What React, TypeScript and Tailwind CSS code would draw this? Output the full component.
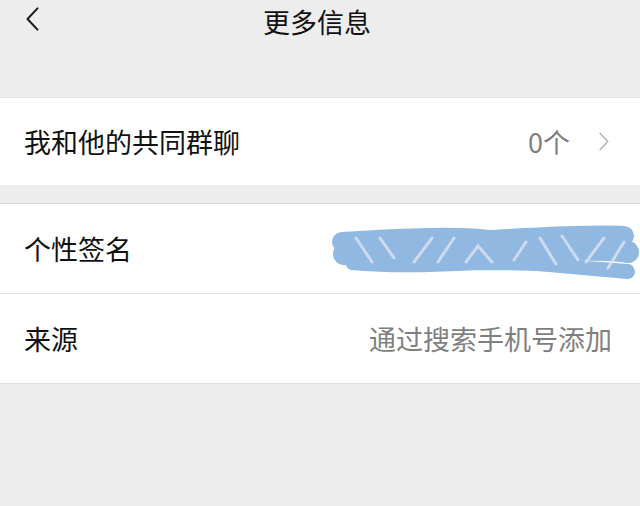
import React from "react";

const font = { fontFamily: '"Noto Sans CJK SC", "Noto Sans", sans-serif' };

function Chevron({ className, left }: { className: string; left?: boolean }) {
  return (
    <svg className={className} viewBox="0 0 12 20" fill="none" stroke="currentColor" strokeWidth={1.6}>
      <path
        d={left ? "M10 1.5 L2 10 L10 18.5" : "M2 1.5 L10 10 L2 18.5"}
        strokeLinecap="round"
        strokeLinejoin="round"
      />
    </svg>
  );
}

// blue marker scribble covering the signature text
function Scribble() {
  return (
    <svg className="absolute left-[328px] top-[18px] h-[60px] w-[312px]" viewBox="0 0 312 60">
      <g stroke="#91b8e0" strokeLinecap="round" strokeLinejoin="round" fill="none">
        <path d="M14 20 C80 16 130 14 160 18 C200 16 260 12 296 14" strokeWidth={20} />
        <path d="M16 32 C90 32 150 28 200 30 C240 28 280 26 300 30" strokeWidth={22} />
        <path d="M24 42 C70 46 110 44 150 42 C200 42 250 44 300 48" strokeWidth={12} />
        <path d="M210 42 L300 50" strokeWidth={14} />
      </g>
      <g stroke="#dce3f4" strokeWidth={3} strokeLinecap="round" fill="none" opacity={0.8}>
        <path d="M28 16 L44 40" />
        <path d="M52 16 L66 36" />
        <path d="M86 40 L104 16" />
        <path d="M110 40 L126 16" />
        <path d="M138 40 L150 24 L164 40" />
        <path d="M186 38 L198 20" />
        <path d="M212 16 L228 42" />
        <path d="M234 14 L250 38" />
        <path d="M258 40 L276 16" />
        <path d="M280 46 L296 20" />
      </g>
    </svg>
  );
}

export default function App() {
  return (
    <div className="h-[506px] w-[640px] overflow-hidden bg-[#ededed]" style={font}>
      {/* Header */}
      <div className="relative flex h-[42px] items-center justify-center pr-[6px]">
        <Chevron left className="absolute left-[25px] top-[6px] h-[26px] w-[15px] text-[#1a1a1a]" />
        <span className="text-[27px] leading-none text-[#111]">更多信息</span>
      </div>
      <div className="h-[55px]" />

      {/* Common groups */}
      <div className="flex h-[88px] items-center border-t border-[#e2e2e2] bg-white pl-[24px] pr-[30px]">
        <span className="flex-1 text-[27px] leading-none text-[#111]">我和他的共同群聊</span>
        <span className="text-[27px] leading-none text-[#7f7f7f]">0个</span>
        <Chevron className="ml-[28px] h-[19px] w-[12px] text-[#b2b2b2]" />
      </div>

      <div className="h-[18px]" />

      {/* Info rows */}
      <div className="border-y border-[#dedede] bg-white">
        <div className="relative flex h-[89px] items-center pl-[24px] pr-[28px]">
          <span className="flex-1 text-[27px] leading-none text-[#111]">个性签名</span>
          <span className="absolute left-[340px] top-[50px] h-[10px] w-[2px] bg-[#333]" />
          <span className="absolute left-[426px] top-[55px] h-[5px] w-[14px] bg-[#333]" />
          <Scribble />
        </div>
        <div className="h-px bg-[#e2e2e2]" />
        <div className="flex h-[89px] items-center pl-[24px] pr-[28px]">
          <span className="flex-1 text-[27px] leading-none text-[#111]">来源</span>
          <span className="text-[27px] leading-none text-[#7f7f7f]">通过搜索手机号添加</span>
        </div>
      </div>
    </div>
  );
}
